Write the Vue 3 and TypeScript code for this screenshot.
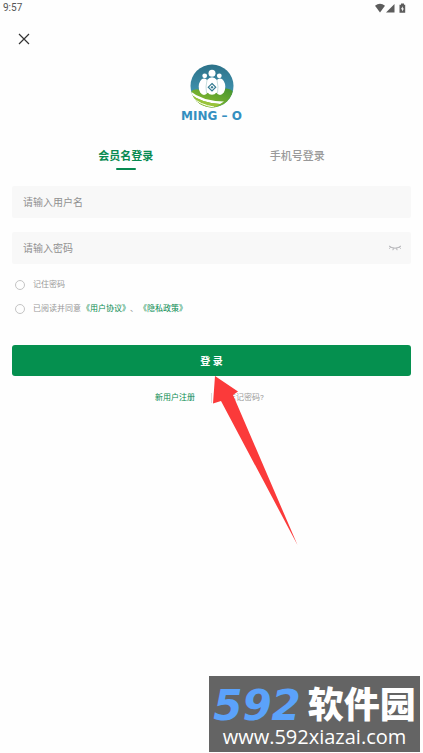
<script setup lang="ts">
import { ref } from 'vue'

type LoginMode = 'member' | 'phone'

const tabs: { id: LoginMode; label: string }[] = [
  { id: 'member', label: '会员名登录' },
  { id: 'phone', label: '手机号登录' },
]
const mode = ref<LoginMode>('member')
const username = ref('')
const password = ref('')
const showPassword = ref(false)
const remember = ref(false)
const agreed = ref(false)
</script>

<template>
  <div class="screen">
    <header class="status">
      <span>9:57</span>
      <svg class="status-icons" width="32" height="12" viewBox="0 0 32 12" aria-hidden="true">
        <path d="M0 3.8Q5 -0.2 10 3.8L5 10.5Z" />
        <path d="M19.5 2v8.5H11Z" />
        <path d="M24.5 2.8H26V1.5h3v1.3h1.2v8h-5.7Z" />
        <path class="bolt" d="M27.8 4.2L25.9 7.2h1.2v2.3l1.9-3.1h-1.2Z" />
      </svg>
    </header>

    <button class="close" type="button" aria-label="关闭">
      <svg width="12" height="12" viewBox="0 0 12 12"><path d="M1 1L11 11M11 1L1 11" /></svg>
    </button>

    <div class="brand">
      <svg width="44" height="44" viewBox="0 0 44 44" aria-hidden="true">
        <defs>
          <linearGradient id="sky" x1="0" y1="0" x2="0" y2="1">
            <stop offset="0" stop-color="#2c7188" />
            <stop offset="1" stop-color="#4aa4c4" />
          </linearGradient>
          <linearGradient id="field" x1="0" y1="1" x2="1" y2="0">
            <stop offset="0" stop-color="#9bc52e" />
            <stop offset="1" stop-color="#43932f" />
          </linearGradient>
          <clipPath id="disc"><circle cx="22" cy="22" r="21.5" /></clipPath>
        </defs>
        <g clip-path="url(#disc)">
          <rect width="44" height="44" fill="url(#sky)" />
          <path d="M0 28Q5 24 10 26L34 25Q39 23 44 28V44H0Z" fill="url(#field)" />
          <path d="M0 27Q12 37 34 37.5L30 40Q12 39 0 30Z" fill="#fff" />
          <path d="M0 29.500Q11 39 30 40L24 44H0Z" fill="#9ac43a" />
          <path d="M2 33Q10 41 24 43" fill="none" stroke="#fff" stroke-width="1" />
        </g>
        <g fill="#fff">
          <circle cx="22" cy="9.3" r="3.5" />
          <circle cx="14.7" cy="11.8" r="2.4" />
          <circle cx="29.3" cy="11.8" r="2.4" />
          <ellipse cx="14" cy="22.8" rx="5.3" ry="8.2" />
          <ellipse cx="30" cy="22.8" rx="5.3" ry="8.2" />
          <ellipse cx="22" cy="22" rx="6.600" ry="8.700" />
        </g>
        <path d="M16.5 29Q15.300 23 17 16M27.5 29Q28.700 23 27 16" fill="none" stroke="#9fc8c8" stroke-width="0.6" />
        <path d="M22 19.5L25.7 23.2L22 26.9L18.3 23.2Z" fill="none" stroke="#347b91" stroke-width="1.2" />
        <path d="M22 21.7L23.5 23.2L22 24.7L20.5 23.2Z" fill="#347b91" />
      </svg>
      <span class="brand-name">MING – O</span>
    </div>

    <nav class="tabs">
      <button
        v-for="tab in tabs"
        :key="tab.id"
        type="button"
        class="tab"
        :class="{ active: mode === tab.id }"
        @click="mode = tab.id"
      >
        {{ tab.label }}
      </button>
    </nav>

    <form class="form" @submit.prevent>
      <label class="field">
        <input v-model="username" type="text" placeholder="请输入用户名" aria-label="用户名" />
      </label>
      <div class="field">
        <input
          v-model="password"
          :type="showPassword ? 'text' : 'password'"
          placeholder="请输入密码"
          aria-label="密码"
        />
        <button class="eye" type="button" aria-label="显示密码" @click="showPassword = !showPassword">
          <svg width="14" height="6" viewBox="0 0 14 6">
            <path d="M1 1Q7 5.4 13 1M2.7 2.2L1.2 3.6M5.4 3.3L4.9 5.2M8.6 3.3L9.1 5.2M11.3 2.2L12.8 3.6" />
          </svg>
        </button>
      </div>

      <div class="checks">
        <div class="check">
          <input id="remember" v-model="remember" type="checkbox" />
          <label for="remember">记住密码</label>
        </div>
        <div class="check">
          <input id="agree" v-model="agreed" type="checkbox" />
          <label for="agree">已阅读并同意<a href="#terms">《用户协议》</a>、<a href="#privacy">《隐私政策》</a></label>
        </div>
      </div>

      <button class="submit" type="submit">登 录</button>
    </form>

    <div class="links">
      <a class="register" href="#register">新用户注册</a>
      <span class="divider"></span>
      <a class="forgot" href="#forgot">忘记密码?</a>
      <svg class="arrow" width="86" height="170" viewBox="0 0 86 170" aria-hidden="true">
        <path d="M3 0L26 15.5L21 19L85.500 169L9 25L1 27.500Z" />
      </svg>
    </div>

    <aside class="watermark">
      <div class="mark-title"><span class="mark-number">592</span><span class="mark-word">软件园</span></div>
      <div class="mark-url">www.592xiazai.com</div>
    </aside>
  </div>
</template>

<style>
body {
  background: #fefefe;
}
</style>

<style scoped>
.screen {
  position: relative;
  box-sizing: border-box;
  min-height: 100vh;
  overflow: hidden;
  background: #fefefe;
  color: #999;
  font-family: Roboto, "Noto Sans CJK SC", sans-serif;
  text-spacing-trim: space-all;
}
button,
input {
  margin: 0;
  padding: 0;
  border: 0;
  background: none;
  color: inherit;
  font-family: inherit;
}
a {
  color: #078a50;
  text-decoration: none;
}
.status {
  display: flex;
  align-items: center;
  justify-content: space-between;
  height: 15px;
  padding: 0 16px 0 3px;
  color: #555;
  font-size: 10px;
  line-height: 15px;
}
.status-icons {
  fill: #5c5c5c;
}
.status-icons .bolt {
  fill: #fff;
}
.close {
  display: flex;
  align-items: center;
  justify-content: center;
  width: 24px;
  height: 24px;
  margin: 12px 12px 13px;
}
.close path {
  fill: none;
  stroke: #333;
  stroke-width: 1.2;
}
.brand {
  display: flex;
  flex-direction: column;
  align-items: center;
}
.brand svg {
  display: block;
}
.brand-name {
  color: #348fc0;
  font: bold 12px/16px "DejaVu Sans", sans-serif;
}
.tabs {
  display: flex;
  margin-top: 24px;
  padding: 0 40px;
}
.tab {
  position: relative;
  flex: 1;
  height: 22px;
  padding-bottom: 4px;
  font-size: 11px;
  font-weight: 500;
  line-height: 16px;
}
.tab.active {
  color: #078a50;
  font-weight: 700;
}
.tab.active::after {
  content: "";
  position: absolute;
  bottom: 0;
  left: 50%;
  width: 20px;
  height: 2px;
  margin-left: -10px;
  border-radius: 1px;
  background: #078a50;
}
.form {
  display: flex;
  flex-direction: column;
  padding: 16px 12px 0;
}
.field {
  display: flex;
  align-items: center;
  height: 32px;
  margin-bottom: 14px;
  padding: 0 9px 0 11px;
  border-radius: 2px;
  background: #f8f8f8;
}
.field input {
  flex: 1;
  min-width: 0;
  height: 32px;
  outline: none;
  color: #555;
  font-size: 10px;
}
.field input::placeholder {
  color: #909090;
  opacity: 1;
}
.eye {
  display: flex;
}
.eye path {
  fill: none;
  stroke: #b0b0b4;
  stroke-width: 1;
}
.checks {
  display: grid;
  gap: 12px;
  padding: 1px 3px 0;
}
.check {
  display: flex;
  align-items: center;
  gap: 8px;
  height: 12px;
  font-size: 8px;
  line-height: 12px;
}
.check input {
  appearance: none;
  box-sizing: border-box;
  width: 10px;
  height: 10px;
  border: 1px solid #c4c4c4;
  border-radius: 50%;
}
.check input:checked {
  background: #078a50;
}
.check a {
  margin-left: 1px;
}
.submit {
  height: 31px;
  margin-top: 30px;
  border-radius: 3px;
  background: #05904f;
  color: #fff;
  font-size: 10px;
  font-weight: 700;
}
.links {
  position: relative;
  display: grid;
  grid-template-columns: 1fr 1px 1fr;
  column-gap: 16px;
  align-items: center;
  margin-top: 15px;
  font-size: 8px;
  line-height: 14px;
}
.register {
  justify-self: end;
}
.divider {
  height: 10px;
  background: #ddd;
}
.forgot {
  color: #999;
}
.arrow {
  position: absolute;
  top: -15px;
  left: 50%;
}
.arrow path {
  fill: #fb3a3a;
}
.watermark {
  position: absolute;
  right: 3px;
  bottom: 1px;
  box-sizing: border-box;
  width: 211px;
  height: 76px;
  padding-top: 11px;
  background: #646464;
  color: #fff;
  text-align: center;
  white-space: nowrap;
}
.mark-title {
  display: flex;
  align-items: center;
  justify-content: center;
  gap: 7px;
  height: 38px;
}
.mark-number {
  color: #5ba2fa;
  font: italic bold 42px/38px "DejaVu Sans", sans-serif;
}
.mark-word {
  font-size: 36px;
  font-weight: 900;
  line-height: 38px;
}
.mark-url {
  font: 20px/24px "Open Sans", sans-serif;
}
</style>
